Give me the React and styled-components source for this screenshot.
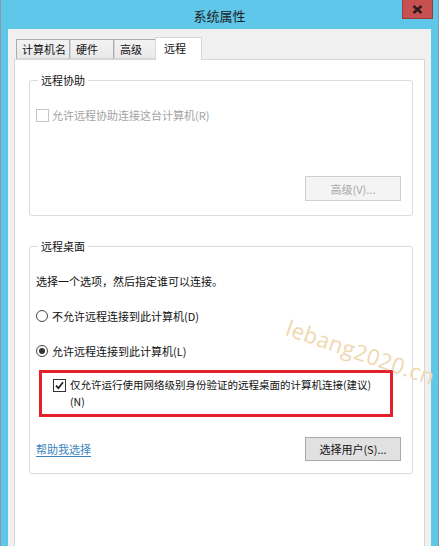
import styled, { createGlobalStyle } from "styled-components";

const Global = createGlobalStyle`
  html, body {
    margin: 0;
    padding: 0;
    background: #ffffff;
  }
  body {
    font-family: "Noto Sans CJK SC", "Liberation Sans", sans-serif;
  }
`;

const Window = styled.div`
  position: relative;
  width: 439px;
  height: 546px;
  box-sizing: border-box;
  background: #5fc7e9;
  border-left: 1px solid #8a9aa3;
  border-right: 1px solid #8a9aa3;
  padding: 0 7px;
  display: flex;
  flex-direction: column;
  overflow: hidden;
`;

const TitleBar = styled.div`
  position: relative;
  height: 29px;
  flex: 0 0 29px;
  display: flex;
  align-items: center;
  justify-content: center;
`;

const Title = styled.div`
  font-size: 13px;
  color: #1e1e1e;
  padding-top: 2px;
`;

const CloseButton = styled.div`
  position: absolute;
  top: 0;
  right: -2px;
  width: 31px;
  height: 19px;
  box-sizing: border-box;
  background: #c75050;
  border: 1px solid #9b3b3b;
  border-top: none;
  display: flex;
  align-items: center;
  justify-content: center;
`;

const Body = styled.div`
  flex: 1;
  background: #f0f0f0;
  padding: 8px 6px 0 6px;
  display: flex;
  flex-direction: column;
`;

const TabStrip = styled.div`
  display: flex;
  align-items: flex-end;
  padding-left: 2px;
  height: 23px;
  position: relative;
  z-index: 1;
`;

const Tab = styled.div`
  box-sizing: border-box;
  width: ${(p) => p.$w}px;
  height: ${(p) => (p.$active ? 23 : 20)}px;
  margin-bottom: ${(p) => (p.$active ? 0 : 1)}px;
  margin-left: ${(p) => (p.$active ? -1 : 0)}px;
  padding: ${(p) => (p.$active ? "2px 0 0 8px" : "1px 0 0 5px")};
  font-size: 11px;
  line-height: 17px;
  color: #111;
  background: ${(p) => (p.$active ? "#ffffff" : "linear-gradient(#f3f3f3, #e9e9e9)")};
  border: 1px solid ${(p) => (p.$active ? "#d6d6d6" : "#acacac")};
  border-bottom: ${(p) => (p.$active ? "none" : "1px solid #d6d6d6")};
  & + & {
    border-left: ${(p) => (p.$active ? "1px solid #d6d6d6" : "none")};
  }
`;

const Pane = styled.div`
  flex: 1;
  margin-top: -1px;
  background: #ffffff;
  border: 1px solid #d6d6d6;
  border-bottom: none;
  padding: 12px 11px 0 14px;
`;

const Group = styled.fieldset`
  margin: ${(p) => p.$mt || 0}px 0 0 0;
  padding: 0 11px ${(p) => p.$pb}px 6px;
  border: 1px solid #dcdcdc;
  border-radius: 3px;
  min-width: 0;
`;

const Legend = styled.legend`
  font-size: 11px;
  line-height: 16px;
  color: #111;
  padding: 0 3px;
  margin-left: 2px;
`;

const Row = styled.div`
  display: flex;
  align-items: center;
  margin-top: ${(p) => p.$mt || 0}px;
  font-size: 11px;
  line-height: 16px;
  color: ${(p) => (p.$disabled ? "#a3a3a3" : "#111")};
`;

const Box = styled.span`
  flex: 0 0 13px;
  width: 13px;
  height: 13px;
  box-sizing: border-box;
  border: 1px solid ${(p) => (p.$disabled ? "#c4c4c4" : "#333")};
  background: #fff;
  margin-right: 3px;
  margin-top: ${(p) => p.$mt || 0}px;
  display: flex;
  align-items: center;
  justify-content: center;
`;

const Radio = styled.span`
  flex: 0 0 12px;
  width: 12px;
  height: 12px;
  box-sizing: border-box;
  border: 1px solid #444;
  border-radius: 50%;
  background: #fff;
  margin-right: 4px;
  display: flex;
  align-items: center;
  justify-content: center;
  &::after {
    content: "";
    display: ${(p) => (p.$on ? "block" : "none")};
    width: 6px;
    height: 6px;
    border-radius: 50%;
    background: #333;
  }
`;

const ButtonRow = styled.div`
  display: flex;
  align-items: center;
  justify-content: ${(p) => (p.$split ? "space-between" : "flex-end")};
  margin-top: ${(p) => p.$mt}px;
`;

const Button = styled.div`
  width: 96px;
  height: ${(p) => p.$h}px;
  box-sizing: border-box;
  display: flex;
  align-items: center;
  justify-content: center;
  font-size: 11px;
  color: ${(p) => (p.$disabled ? "#a8a8a8" : "#111")};
  background: ${(p) => (p.$disabled ? "#f4f4f4" : "#e1e1e1")};
  border: 1px solid ${(p) => (p.$disabled ? "#cfcfcf" : "#a9a9a9")};
`;

const Highlight = styled.div`
  margin: 11px 0 0 3px;
  width: 354px;
  box-sizing: border-box;
  border: 3px solid #e2212b;
  padding: 3px 4px 4px 11px;
  display: flex;
  align-items: flex-start;
`;

const HighlightText = styled.div`
  font-size: 10.5px;
  line-height: 17px;
  color: #111;
  padding-left: 1px;
  white-space: nowrap;
`;

const HelpLink = styled.a`
  font-size: 11px;
  color: #3a84bf;
  text-decoration: underline;
  text-underline-offset: 2px;
`;

const Watermark = styled.div`
  position: absolute;
  left: 291px;
  top: 312px;
  transform-origin: left top;
  transform: rotate(19deg);
  font-family: "Open Sans", "DejaVu Sans", sans-serif;
  font-size: 22px;
  letter-spacing: 0.5px;
  color: #efd8b0;
  white-space: nowrap;
  pointer-events: none;
`;

const Check = () => (
  <svg width="9" height="9" viewBox="0 0 9 9">
    <path d="M1 4.6 L3.4 7.2 L8 1.2" fill="none" stroke="#222" strokeWidth="1.8" />
  </svg>
);

const CloseX = () => (
  <svg width="11" height="9" viewBox="0 0 11 9">
    <path d="M1.5 1 L9.5 8 M9.5 1 L1.5 8" stroke="#2a1c1c" strokeWidth="2.4" />
  </svg>
);

const tabs = [
  { label: "计算机名", w: 54 },
  { label: "硬件", w: 44 },
  { label: "高级", w: 42 },
  { label: "远程", w: 47, active: true },
];

export default function App() {
  return (
    <>
      <Global />
      <Window>
        <TitleBar>
          <Title>系统属性</Title>
          <CloseButton>
            <CloseX />
          </CloseButton>
        </TitleBar>
        <Body>
          <TabStrip>
            {tabs.map((t) => (
              <Tab key={t.label} $w={t.w} $active={t.active}>
                {t.label}
              </Tab>
            ))}
          </TabStrip>
          <Pane>
            <Group $pb={14}>
              <Legend>远程协助</Legend>
              <Row $mt={19} $disabled>
                <Box $disabled />
                允许远程协助连接这台计算机(R)
              </Row>
              <ButtonRow $mt={53}>
                <Button $h={25} $disabled>
                  高级(V)...
                </Button>
              </ButtonRow>
            </Group>

            <Group $mt={22} $pb={12}>
              <Legend>远程桌面</Legend>
              <Row $mt={19}>选择一个选项，然后指定谁可以连接。</Row>
              <Row $mt={19}>
                <Radio />
                不允许远程连接到此计算机(D)
              </Row>
              <Row $mt={19}>
                <Radio $on />
                允许远程连接到此计算机(L)
              </Row>
              <Highlight>
                <Box $mt={3}>
                  <Check />
                </Box>
                <HighlightText>
                  仅允许运行使用网络级别身份验证的远程桌面的计算机连接(建议)
                  <br />
                  (N)
                </HighlightText>
              </Highlight>
              <ButtonRow $split $mt={20}>
                <HelpLink>帮助我选择</HelpLink>
                <Button $h={24}>选择用户(S)...</Button>
              </ButtonRow>
            </Group>
          </Pane>
        </Body>
        <Watermark>lebang2020.cn</Watermark>
      </Window>
    </>
  );
}
